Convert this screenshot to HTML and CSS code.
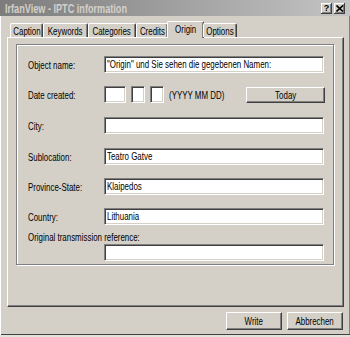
FILE: index.html
```html
<!DOCTYPE html>
<html lang="de">
<head>
  <meta charset="UTF-8" />
  <title>IrfanView - IPTC information</title>
  <link rel="stylesheet" href="styles.css">
</head>
<body>
  <div class="window">
    <!-- Titelleiste -->
    <div class="titlebar">
      <span class="title sx">IrfanView - IPTC information</span>
      <div class="tbtn"><span class="q">?</span></div>
      <div class="tbtn">
        <svg width="8" height="7" viewBox="0 0 8 7"><path d="M0.5 0.5 L7 6.5 M7 0.5 L0.5 6.5" stroke="#000" stroke-width="1.6"/></svg>
      </div>
    </div>

    <!-- Reiter -->
    <div class="tabs">
      <div class="tab w-caption"><span class="sx">Caption</span></div>
      <div class="tab w-keywords"><span class="sx">Keywords</span></div>
      <div class="tab w-categories"><span class="sx">Categories</span></div>
      <div class="tab w-credits"><span class="sx">Credits</span></div>
      <div class="tab active w-origin"><span class="sx">Origin</span></div>
      <div class="tab w-options"><span class="sx">Options</span></div>
    </div>

    <div class="panel">
      <div class="group">
        <div class="row">
          <div class="lbl"><span class="sx">Object name:</span></div>
          <div class="field"><span class="sx">"Origin" und Sie sehen die gegebenen Namen:</span></div>
        </div>
        <div class="row">
          <div class="lbl"><span class="sx">Date created:</span></div>
          <div class="date">
            <div class="field f-year"></div>
            <div class="field f-small"></div>
            <div class="field f-small"></div>
            <span class="hint"><span class="sx">(YYYY MM DD)</span></span>
            <div class="btn today"><span class="sx">Today</span></div>
          </div>
        </div>
        <div class="row sp">
          <div class="lbl"><span class="sx">City:</span></div>
          <div class="field"></div>
        </div>
        <div class="row sp">
          <div class="lbl"><span class="sx">Sublocation:</span></div>
          <div class="field"><span class="sx">Teatro Gatve</span></div>
        </div>
        <div class="row">
          <div class="lbl"><span class="sx">Province-State:</span></div>
          <div class="field"><span class="sx">Klaipedos</span></div>
        </div>
        <div class="row">
          <div class="lbl"><span class="sx">Country:</span></div>
          <div class="field"><span class="sx">Lithuania</span></div>
        </div>
        <div class="lbl-long"><span class="sx">Original transmission reference:</span></div>
        <div class="row-indent">
          <div class="field"></div>
        </div>
      </div>
    </div>

    <div class="actions">
      <div class="btn"><span class="sx">Write</span></div>
      <div class="btn"><span class="sx">Abbrechen</span></div>
    </div>
  </div>
</body>
</html>
```

FILE: styles.css
```css
html, body {
  margin: 0;
  padding: 0;
  background-color: #e4e2dc;
  font-family: "Liberation Sans", Arial, sans-serif;
  font-size: 11px;
  color: #000;
}

/* schmale Schrift wie im Screenshot */
.sx {
  display: inline-block;
  white-space: nowrap;
  transform: scaleX(0.72);
}

.window {
  width: 350px;
  height: 335px;
  box-sizing: border-box;
  background-color: #d4d0c8;
  box-shadow: inset 1px 0 #fff, inset 0 -1px #404040, inset -1px 0 #808080;
}

.titlebar {
  height: 16px;
  display: flex;
  align-items: center;
  padding: 0 5px 0 5px;
  background: linear-gradient(90deg, #7c7c7c, #c4c4c4);
}

.title {
  font-weight: bold;
  font-size: 12px;
  color: #d4d0c8;
  transform: scaleX(0.76);
  transform-origin: left center;
  margin-top: 2px;
}

.tbtn {
  width: 11px;
  height: 11px;
  margin-left: 2px;
  box-sizing: border-box;
  background-color: #d4d0c8;
  box-shadow: inset -1px -1px #404040, inset 1px 1px #fff, inset -2px -2px #808080;
  display: flex;
  align-items: center;
  justify-content: center;
}

.tbtn:first-of-type {
  margin-left: auto;
}

.tbtn .q {
  font-weight: bold;
  font-size: 9px;
  line-height: 9px;
}

.tabs {
  display: flex;
  align-items: flex-end;
  height: 16px;
  margin-top: 5px;
  padding-left: 10px;
  position: relative;
  z-index: 1;
}

.tab {
  height: 14px;
  box-sizing: border-box;
  border-top: 1px solid #fff;
  border-left: 1px solid #fff;
  border-right: 1px solid #404040;
  border-radius: 2px 2px 0 0;
  box-shadow: inset -1px 0 #808080;
  display: flex;
  align-items: center;
  justify-content: center;
  padding-top: 1px;
}

.tab.active {
  height: 17px;
  margin: 0 -1px -1px -1px;
  background-color: #d4d0c8;
  padding-bottom: 3px;
}

.w-caption { width: 33px; }
.w-keywords { width: 45px; }
.w-categories { width: 48px; }
.w-credits { width: 32px; }
.w-origin { width: 37px; }
.w-options { width: 34px; }

.panel {
  margin-left: 7px;
  width: 337px;
  height: 270px;
  box-sizing: border-box;
  border: 1px solid;
  border-color: #fff #404040 #404040 #fff;
  box-shadow: inset -1px -1px #808080;
  padding: 6px 0 0 8px;
}

.group {
  width: 318px;
  box-sizing: border-box;
  border: 1px solid #808080;
  box-shadow: inset 1px 1px #fff, 1px 1px #fff;
  padding: 11px 0 3px 11px;
}

.row {
  display: flex;
  align-items: center;
  height: 17px;
}

.row + .row {
  margin-top: 13px;
}

.row.sp {
  margin-top: 14px;
}

.lbl {
  width: 76px;
  flex-shrink: 0;
  line-height: 17px;
  padding-top: 1px;
}

.lbl .sx,
.field .sx,
.lbl-long .sx {
  transform-origin: left center;
}

.field {
  width: 220px;
  height: 17px;
  box-sizing: border-box;
  background-color: #fff;
  border: 1px solid;
  border-color: #808080 #fff #fff #808080;
  box-shadow: inset 1px 1px #404040, inset -1px -1px #d4d0c8;
  padding-left: 2px;
  line-height: 15px;
  overflow: hidden;
}

.date {
  display: flex;
  align-items: center;
  width: 220px;
}

.date .field {
  margin-right: 5px;
}

.f-year { width: 24px; }
.f-small { width: 15px; }

.hint .sx {
  transform-origin: left center;
}

.btn {
  box-sizing: border-box;
  border: 1px solid;
  border-color: #fff #404040 #404040 #fff;
  box-shadow: inset -1px -1px #808080;
  background-color: #d4d0c8;
  display: flex;
  align-items: center;
  justify-content: center;
}

.today {
  width: 87px;
  height: 16px;
  margin-left: auto;
  margin-right: -1px;
}

.lbl-long {
  margin-top: 5px;
  line-height: 14px;
}

.row-indent {
  padding-left: 76px;
}

.actions {
  display: flex;
  justify-content: flex-end;
  gap: 5px;
  margin-top: 5px;
  padding-right: 7px;
}

.actions .btn {
  width: 56px;
  height: 18px;
}
```
